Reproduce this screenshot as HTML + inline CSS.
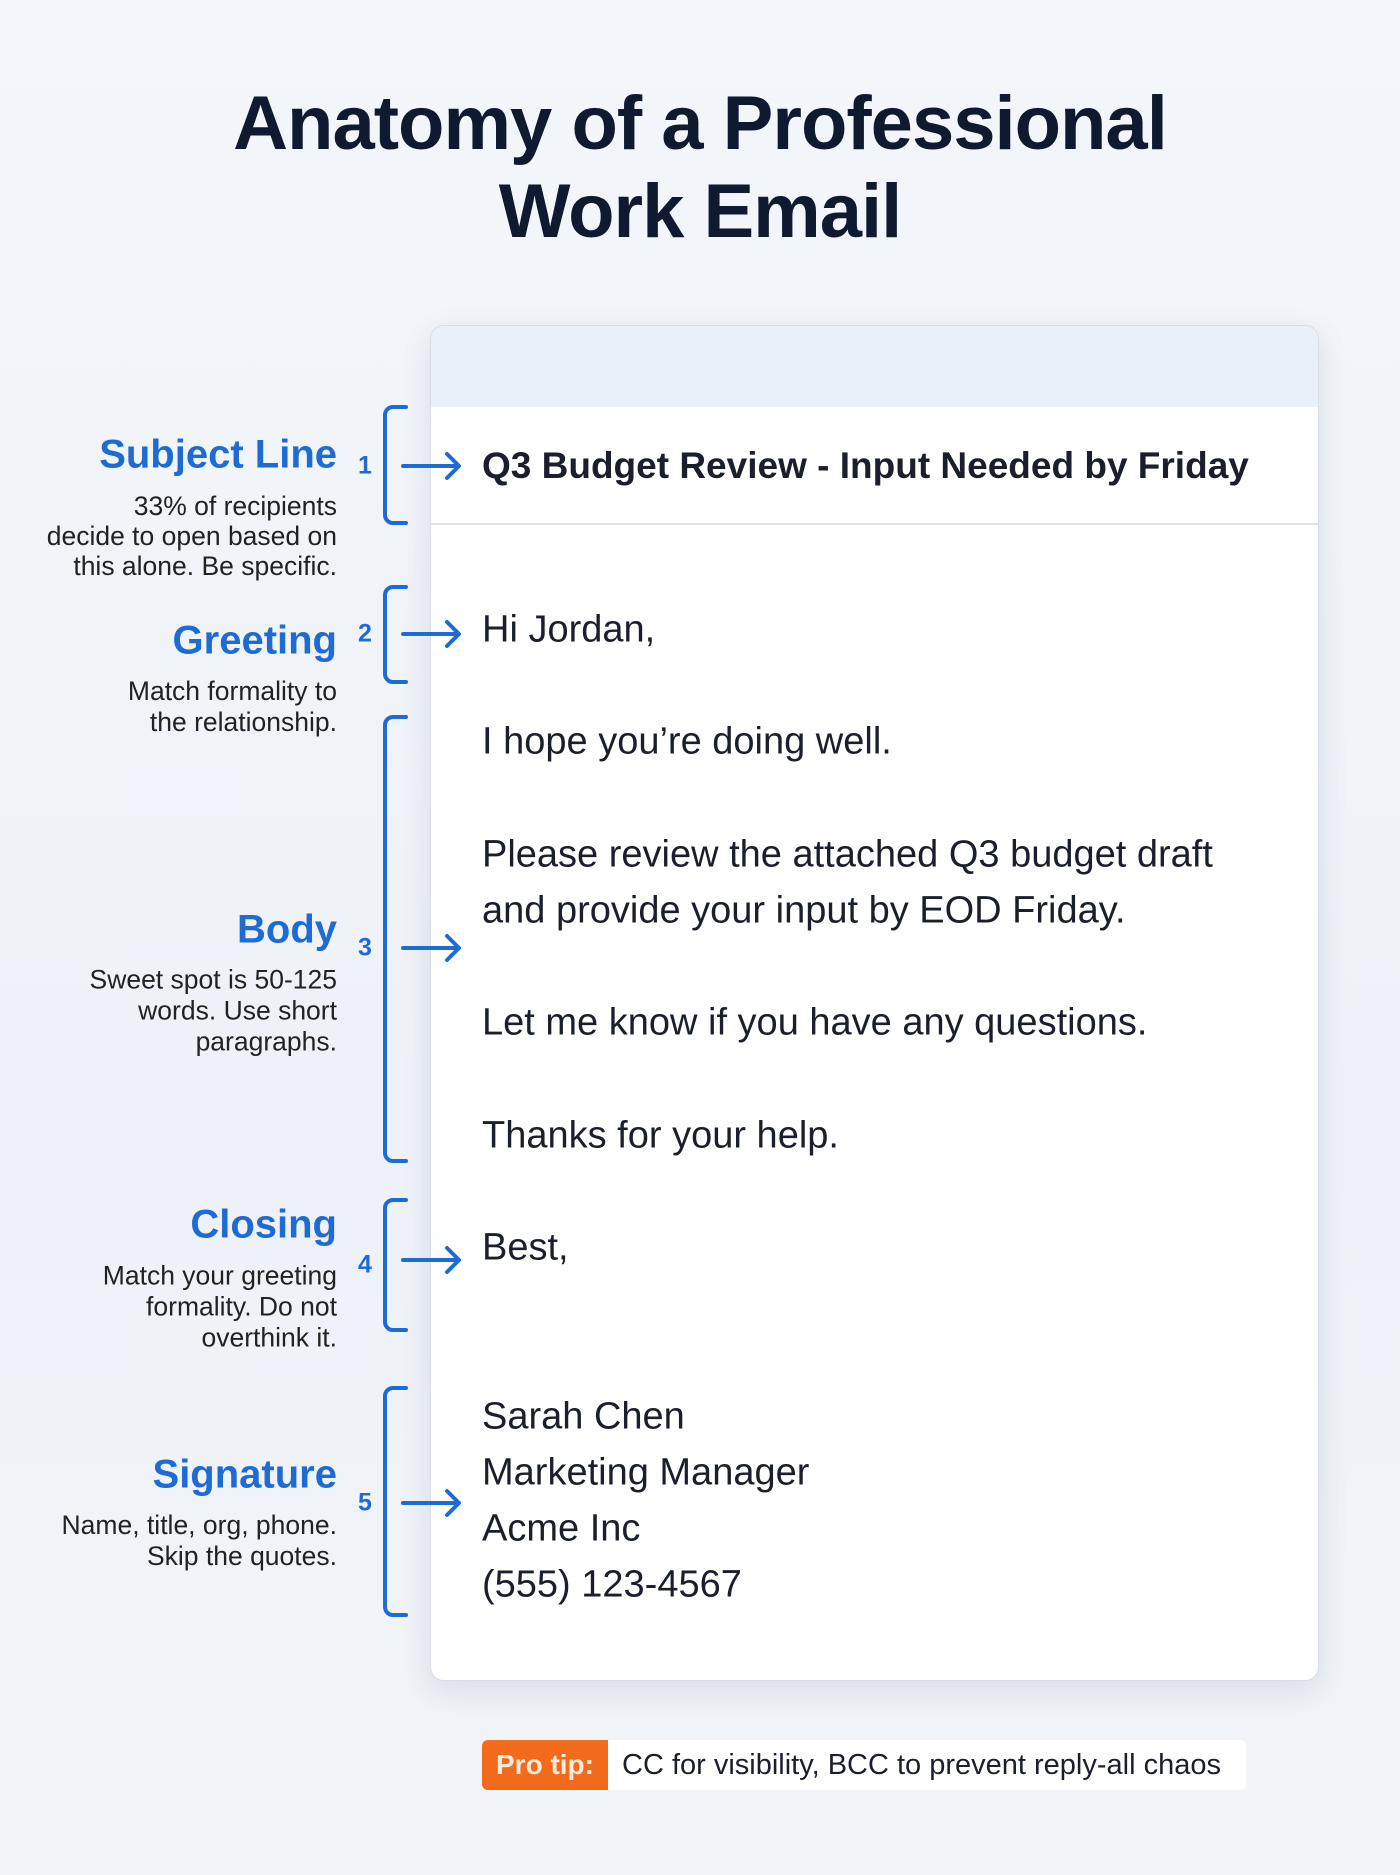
<!DOCTYPE html>
<html><head><meta charset="utf-8"><style>
*{margin:0;padding:0;box-sizing:border-box}
body{width:1400px;height:1875px;background:linear-gradient(180deg,#f3f6fa,#eef2f8 60%,#f1f4f8);font-family:"Liberation Sans",sans-serif;position:relative;overflow:hidden;color:#1a1f2b}
h1{position:absolute;left:0;width:1400px;text-align:center;font-size:76px;font-weight:bold;color:#0f1a30;line-height:88px;top:80px;letter-spacing:-1px}
.card{position:absolute;left:430px;top:325px;width:889px;height:1356px;background:#fff;border:1px solid #d8dde6;border-radius:14px;box-shadow:0 10px 30px rgba(40,60,100,.12);overflow:hidden}
.band{height:81px;background:#e9f0fa}
.subj{height:118px;border-bottom:2px solid #dde2ea}
.e{position:absolute;left:482px;font-size:38px;color:#1a1f2b;transform:translateY(-50%);white-space:nowrap}
.h{position:absolute;right:1063px;font-size:40px;font-weight:bold;color:#1f6bd4;transform:translateY(-50%);white-space:nowrap}
.d{position:absolute;right:1063px;font-size:26.5px;color:#222;text-align:right;transform:translateY(-50%);white-space:nowrap}
.n{position:absolute;left:358px;font-size:25px;font-weight:bold;color:#1f6bd4;transform:translateY(-50%)}
.tip{position:absolute;left:482px;top:1740px;height:50px;width:764px;background:#fff;border-radius:6px;display:flex;align-items:center;font-size:29px;white-space:nowrap}
.tip b{background:#f26b1d;color:#fde9d8;height:50px;display:flex;align-items:center;padding:0 14px;border-radius:6px 0 0 6px;margin-right:14px;font-size:28px}
</style></head><body>
<h1>Anatomy of a Professional<br>Work Email</h1>
<div class="card"><div class="band"></div><div class="subj"></div></div>
<div class="e" style="top:466px;font-weight:bold;font-size:37px">Q3 Budget Review - Input Needed by Friday</div>
<div class="e" style="top:630px">Hi Jordan,</div>
<div class="e" style="top:742px">I hope you’re doing well.</div>
<div class="e" style="top:855px">Please review the attached Q3 budget draft</div>
<div class="e" style="top:911px">and provide your input by EOD Friday.</div>
<div class="e" style="top:1023px">Let me know if you have any questions.</div>
<div class="e" style="top:1136px">Thanks for your help.</div>
<div class="e" style="top:1248px">Best,</div>
<div class="e" style="top:1417px">Sarah Chen</div>
<div class="e" style="top:1473px">Marketing Manager</div>
<div class="e" style="top:1529px">Acme Inc</div>
<div class="e" style="top:1585px">(555) 123-4567</div>

<div class="h" style="top:455px">Subject Line</div>
<div class="d" style="top:536px;line-height:30px">33% of recipients<br>decide to open based on<br>this alone. Be specific.</div>
<div class="h" style="top:641px">Greeting</div>
<div class="d" style="top:707px;line-height:31px">Match formality to<br>the relationship.</div>
<div class="h" style="top:930px">Body</div>
<div class="d" style="top:1011px;line-height:31px">Sweet spot is 50-125<br>words. Use short<br>paragraphs.</div>
<div class="h" style="top:1225px">Closing</div>
<div class="d" style="top:1307px;line-height:31px">Match your greeting<br>formality. Do not<br>overthink it.</div>
<div class="h" style="top:1475px">Signature</div>
<div class="d" style="top:1541px;line-height:31px">Name, title, org, phone.<br>Skip the quotes.</div>

<div class="n" style="top:466px">1</div>
<div class="n" style="top:634px">2</div>
<div class="n" style="top:948px">3</div>
<div class="n" style="top:1265px">4</div>
<div class="n" style="top:1503px">5</div>

<svg width="1400" height="1875" style="position:absolute;left:0;top:0" fill="none" stroke="#1f6bd4" stroke-width="4" stroke-linecap="round" stroke-linejoin="round">
<path d="M406 407H393a8 8 0 0 0-8 8V515a8 8 0 0 0 8 8H406"/>
<path d="M406 587H393a8 8 0 0 0-8 8V674a8 8 0 0 0 8 8H406"/>
<path d="M406 717H393a8 8 0 0 0-8 8V1153a8 8 0 0 0 8 8H406"/>
<path d="M406 1200H393a8 8 0 0 0-8 8V1322a8 8 0 0 0 8 8H406"/>
<path d="M406 1388H393a8 8 0 0 0-8 8V1607a8 8 0 0 0 8 8H406"/>
<path d="M403 466H458M447 454L459 466L447 478"/>
<path d="M403 634H458M447 622L459 634L447 646"/>
<path d="M403 948H458M447 936L459 948L447 960"/>
<path d="M403 1260H458M447 1248L459 1260L447 1272"/>
<path d="M403 1503H458M447 1491L459 1503L447 1515"/>
</svg>
<div class="tip"><b>Pro tip:</b>CC for visibility, BCC to prevent reply-all chaos</div>
</body></html>
